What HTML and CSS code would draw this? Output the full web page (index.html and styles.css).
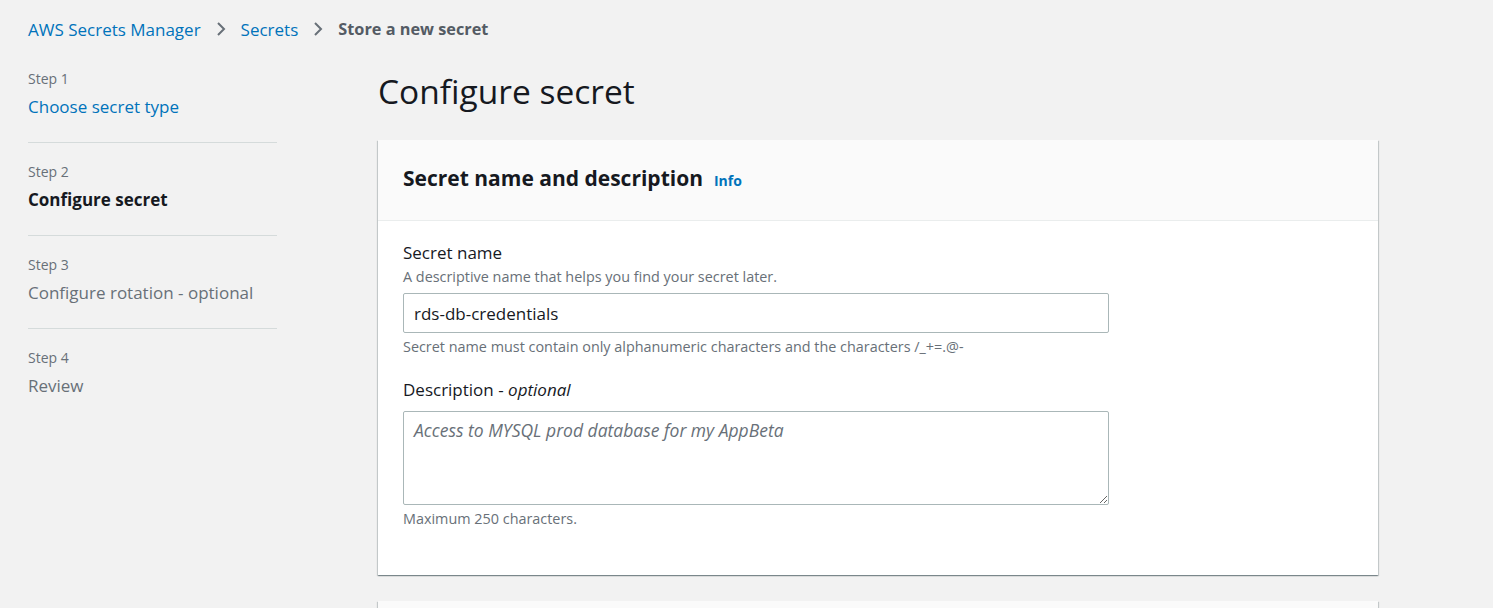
FILE: index.html
```html
<!DOCTYPE html>
<html lang="en">
<head>
<meta charset="utf-8">
<title>Store a new secret</title>
<link rel="stylesheet" href="styles.css">
</head>
<body>
<nav class="breadcrumbs">
  <a class="crumb-link" href="#">AWS Secrets Manager</a>
  <svg class="chev" viewBox="0 0 16 16" width="16" height="16"><path d="M5 2l6 6-6 6" fill="none" stroke="#687078" stroke-width="2"/></svg>
  <a class="crumb-link" href="#">Secrets</a>
  <svg class="chev" viewBox="0 0 16 16" width="16" height="16"><path d="M5 2l6 6-6 6" fill="none" stroke="#687078" stroke-width="2"/></svg>
  <span class="crumb-current">Store a new secret</span>
</nav>
<div class="layout">
  <aside class="steps">
    <div class="step">
      <div class="step-num">Step 1</div>
      <a class="step-title link" href="#">Choose secret type</a>
    </div>
    <div class="step">
      <div class="step-num">Step 2</div>
      <div class="step-title active">Configure secret</div>
    </div>
    <div class="step">
      <div class="step-num">Step 3</div>
      <div class="step-title muted">Configure rotation - optional</div>
    </div>
    <div class="step">
      <div class="step-num">Step 4</div>
      <div class="step-title muted">Review</div>
    </div>
  </aside>
  <main class="content">
    <h1 class="page-title">Configure secret</h1>
    <section class="card">
      <header class="card-header">
        <h2 class="card-title">Secret name and description</h2>
        <a class="info" href="#">Info</a>
      </header>
      <div class="card-body">
        <div class="field">
          <label class="field-label">Secret name</label>
          <div class="field-desc">A descriptive name that helps you find your secret later.</div>
          <input class="text-input" type="text" value="rds-db-credentials">
          <div class="field-hint">Secret name must contain only alphanumeric characters and the characters /_+=.@-</div>
        </div>
        <div class="field">
          <label class="field-label">Description - <i>optional</i></label>
          <textarea class="text-area" placeholder="Access to MYSQL prod database for my AppBeta"></textarea>
          <div class="field-hint">Maximum 250 characters.</div>
        </div>
      </div>
    </section>
    <section class="card card-next"></section>
  </main>
</div>
</body>
</html>
```
FILE: styles.css
```css
* { box-sizing: border-box; }
html, body { margin: 0; padding: 0; }
body {
  background: #f2f2f2;
  font-family: "Open Sans", "Noto Sans", sans-serif;
  color: #16191f;
  overflow: hidden;
  height: 608px;
}
a { text-decoration: none; }
.breadcrumbs {
  display: flex;
  align-items: center;
  height: 58px;
  padding: 0 0 0 28px;
  font-size: 17px;
}
.crumb-link { color: #0073bb; }
.chev { margin: 0 12px 0 12px; }
.crumb-current { color: #545b64; font-weight: 700; font-size: 16.3px; }
.layout {
  display: flex;
  padding-left: 28px;
}
.steps {
  width: 249px;
  flex: none;
  margin-right: 101px;
  padding-top: 10px;
}
.step {
  border-bottom: 1px solid #d5dbdb;
  padding: 0 0 22px;
  margin-bottom: 18px;
}
.step:last-child { border-bottom: none; }
.step-num {
  font-size: 14px;
  color: #687078;
  line-height: 22px;
}
.step-title {
  font-size: 17px;
  line-height: 26px;
  margin-top: 4px;
  display: block;
}
.step-title.link { color: #0073bb; }
.step-title.active { color: #16191f; font-weight: 700; }
.step-title.muted { color: #687078; }
.content {
  width: 1000px;
  flex: none;
}
.page-title {
  margin: 12px 0 0;
  font-size: 33.5px;
  font-weight: 400;
  line-height: 42px;
  height: 70px;
  color: #16191f;
}
.card {
  background: #fff;
  box-shadow: 0 1px 1px 0 rgba(0,28,36,.3), 1px 1px 1px 0 rgba(0,28,36,.15), -1px 1px 1px 0 rgba(0,28,36,.15);
}
.card-header {
  background: #fafafa;
  border-bottom: 1px solid #eaeded;
  height: 81px;
  display: flex;
  align-items: baseline;
  padding: 24px 25px 0;
}
.card-title {
  margin: 0;
  font-size: 21px;
  font-weight: 700;
  line-height: 28px;
}
.info {
  color: #0073bb;
  font-size: 14px;
  font-weight: 700;
  margin-left: 11px;
}
.card-body {
  padding: 20px 25px 46px;
}
.field { margin-bottom: 21px; }
.field:last-child { margin-bottom: 0; }
.field-label {
  display: block;
  font-size: 17px;
  line-height: 24px;
  color: #16191f;
}
.field-desc, .field-hint {
  font-size: 14.4px;
  color: #687078;
}
.field-desc { margin: 1px 0 5px; line-height: 22px; }
.field-hint { margin-top: 4px; line-height: 20px; }
.text-input, .text-area {
  display: block;
  width: 706px;
  border: 1px solid #aab7b8;
  border-radius: 2px;
  background: #fff;
  font-family: inherit;
  font-size: 17px;
  color: #16191f;
  padding: 0 10px;
  margin: 0;
  outline: none;
}
.text-input { height: 40px; }
.text-area {
  height: 94px;
  margin-top: 9px;
  padding-top: 6px;
  font-size: 17.5px;
  resize: both;
}
.text-area::placeholder { color: #687078; font-style: italic; }
.card-next {
  margin-top: 26px;
  height: 7px;
  background: #fafafa;
}
```
